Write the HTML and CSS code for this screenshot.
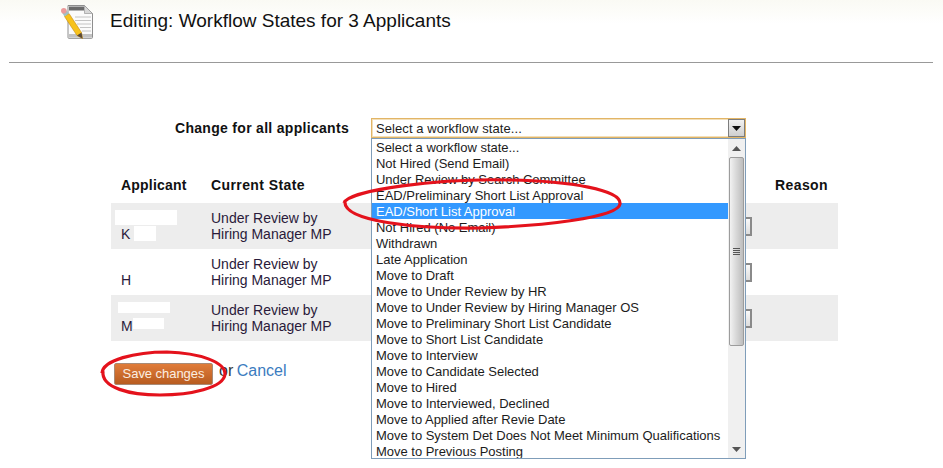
FILE: index.html
```html
<!DOCTYPE html>
<html lang="en">
<head>
<meta charset="utf-8">
<title>Editing: Workflow States</title>
<link rel="stylesheet" href="styles.css">
</head>
<body>
<header class="top">
  <svg class="doc-icon" width="34" height="37" viewBox="0 0 34 37" aria-hidden="true">
    <path d="M8 2.500H24.500L32.500 10.500V34.500a.8.8 0 0 1-.8.8H8.800a.8.8 0 0 1-.8-.8Z" fill="#fbfbfb" stroke="#8e8e8e"/>
    <path d="M9 3.500H24V7.500H9Z" fill="#6b6b6b"/>
    <path d="M24.500 2.500V10.500H32.500Z" fill="#d8d8d8" stroke="#9a9a9a" stroke-width=".7"/>
    <path d="M15 14H31M15 17.500H31M17 21H31M20 24.500H31M22 28H31" stroke="#c4c4c4"/>
    <rect x="9" y="31" width="23" height="3.500" fill="#c2c2c2"/>
    <path d="M4.500 13.500L9 10.500L21.500 29.500L22.500 35.500L17 32.500Z" fill="#f7c21c" stroke="#c58a10" stroke-width=".6"/>
    <path d="M2 9.500L6 7L9 10.500L4.500 13.500Z" fill="#9fc0c4"/>
    <circle cx="3.800" cy="7.800" r="2.800" fill="#ec9a9a"/>
    <path d="M17 32.500L21.500 29.500L22.500 35.500Z" fill="#5b4a38"/>
  </svg>
  <h1 class="title">Editing: Workflow States for 3 Applicants</h1>
</header>
<hr class="rule">
<main class="content">
  <div class="change-all">
    <label class="change-label">Change for all applicants</label>
    <div class="combo">
      <div class="combo-box">
        <span class="combo-value">Select a workflow state...</span>
        <span class="combo-btn"><svg width="9" height="5" viewBox="0 0 9 5"><path d="M0 0H9L4.500 5Z" fill="#111"/></svg></span>
      </div>
      <div class="popup">
        <ul class="options">
          <li>Select a workflow state...</li>
          <li>Not Hired (Send Email)</li>
          <li>Under Review by Search Committee</li>
          <li>EAD/Preliminary Short List Approval</li>
          <li class="selected">EAD/Short List Approval</li>
          <li>Not Hired (No Email)</li>
          <li>Withdrawn</li>
          <li>Late Application</li>
          <li>Move to Draft</li>
          <li>Move to Under Review by HR</li>
          <li>Move to Under Review by Hiring Manager OS</li>
          <li>Move to Preliminary Short List Candidate</li>
          <li>Move to Short List Candidate</li>
          <li>Move to Interview</li>
          <li>Move to Candidate Selected</li>
          <li>Move to Hired</li>
          <li>Move to Interviewed, Declined</li>
          <li>Move to Applied after Revie Date</li>
          <li>Move to System Det Does Not Meet Minimum Qualifications</li>
          <li>Move to Previous Posting</li>
        </ul>
        <div class="scrollbar">
          <span class="arrow"><svg width="9" height="5" viewBox="0 0 9 5"><path d="M0 5H9L4.500 0Z" fill="#555"/></svg></span>
          <div class="thumb"><span class="grip"></span></div>
          <span class="track"></span>
          <span class="arrow"><svg width="9" height="5" viewBox="0 0 9 5"><path d="M0 0H9L4.500 5Z" fill="#555"/></svg></span>
        </div>
      </div>
    </div>
  </div>

  <table class="grid">
    <thead>
      <tr>
        <th class="c-name">Applicant</th>
        <th class="c-state">Current State</th>
        <th class="c-new"></th>
        <th class="c-reason">Reason</th>
      </tr>
    </thead>
    <tbody>
      <tr class="alt">
        <td class="c-name"><span class="redact r1"></span><br>K<span class="redact r2"></span></td>
        <td class="c-state">Under Review by<br>Hiring Manager MP</td>
        <td class="c-new"><span class="row-select"></span></td>
        <td></td>
      </tr>
      <tr>
        <td class="c-name"><br>H</td>
        <td class="c-state">Under Review by<br>Hiring Manager MP</td>
        <td class="c-new"><span class="row-select"></span></td>
        <td></td>
      </tr>
      <tr class="alt">
        <td class="c-name"><span class="redact r3"></span><br>M<span class="redact r4"></span></td>
        <td class="c-state">Under Review by<br>Hiring Manager MP</td>
        <td class="c-new"><span class="row-select"></span></td>
        <td></td>
      </tr>
    </tbody>
  </table>

  <div class="actions">
    <button class="save" type="button">Save changes</button>
    <span class="or">or <a class="cancel" href="#">Cancel</a></span>
  </div>
</main>
<svg class="marks" width="943" height="468" viewBox="0 0 943 468" aria-hidden="true">
  <path d="M344 203C348 190 440 178 510 180C570 181 622 190 620 204C618 218 540 226 480 228C420 229 342 222 345 201" />
  <path d="M102 373C103 360 135 352 167 352C200 353 225 362 225 374C224 388 190 395 160 395C130 395 101 388 103 371" />
</svg>
</body>
</html>
```
FILE: styles.css
```css
html, body {
  margin: 0;
  padding: 0;
  height: 468px;
  overflow: hidden;
  background: #fff;
  font-family: "Liberation Sans", Arial, sans-serif;
  font-size: 14px;
  line-height: 16px;
  color: #1c1c1c;
}

.top {
  display: flex;
  align-items: flex-start;
  height: 62px;
  padding-left: 60px;
  box-sizing: border-box;
  background: linear-gradient(#fafaf4, #ffffff 24px);
}

.doc-icon {
  margin-top: 3px;
  flex: none;
}

.title {
  margin: 10px 0 0 16px;
  font-size: 19px;
  line-height: 22px;
  font-weight: normal;
  color: #111;
}

.rule {
  margin: 0 10px 0 9px;
  height: 1px;
  border: 0;
  background: #999;
}

.content {
  width: 727px;
  margin-left: 111px;
}

.change-all {
  display: flex;
  align-items: center;
  margin-top: 55px;
  height: 20px;
}

.change-label {
  width: 238px;
  text-align: right;
  font-weight: bold;
  letter-spacing: .3px;
  color: #111;
}

.combo {
  position: relative;
  margin-left: 22px;
  width: 375px;
  height: 20px;
  font-size: 13px;
}

.combo-box {
  display: flex;
  justify-content: space-between;
  height: 20px;
  box-sizing: border-box;
  border: 1px solid #e2b566;
  background: #fff;
  padding-left: 4px;
  align-items: center;
  box-shadow: inset 0 0 0 1px #f3dfb8;
}

.combo-value {
  padding-top: 1px;
  letter-spacing: .08px;
}

.combo-btn {
  display: flex;
  align-items: center;
  justify-content: center;
  width: 17px;
  height: 18px;
  box-sizing: border-box;
  border: 1px solid #7d7d7d;
  background: linear-gradient(#f2f2f2, #cfcfcf);
}

.popup {
  position: absolute;
  z-index: 5;
  top: 20px;
  left: 0;
  width: 375px;
  height: 321px;
  box-sizing: border-box;
  border: 1px solid #7f9db9;
  background: #fff;
  display: flex;
  justify-content: space-between;
}

.options {
  list-style: none;
  margin: 0;
  padding: 0;
  flex: 1;
  height: 319px;
  overflow: hidden;
}

.options li {
  height: 16px;
  box-sizing: border-box;
  padding: 1px 0 0 4px;
  white-space: nowrap;
  letter-spacing: -.02px;
}

.options li.selected {
  background: #3399ff;
  color: #fff;
}

.scrollbar {
  flex: none;
  width: 17px;
  display: flex;
  flex-direction: column;
  align-items: center;
  background: #f0f0f0;
}

.arrow {
  flex: none;
  height: 18px;
  display: flex;
  align-items: center;
  justify-content: center;
}

.thumb {
  flex: none;
  width: 15px;
  height: 189px;
  box-sizing: border-box;
  border: 1px solid #9c9c9c;
  border-radius: 2px;
  background: linear-gradient(90deg, #f2f2f2, #dcdcdc 40%, #bdbdbd);
  display: flex;
  align-items: center;
  justify-content: center;
}

.grip {
  display: block;
  width: 7px;
  height: 7px;
  background: repeating-linear-gradient(#555 0 1px, transparent 1px 2px);
}

.track {
  flex: 1;
}

.grid {
  width: 727px;
  margin-top: 29px;
  border-collapse: collapse;
  table-layout: fixed;
}

.grid th {
  height: 36px;
  padding: 0;
  text-align: left;
  font-weight: bold;
  letter-spacing: .4px;
  color: #111;
}

.grid th.c-name {
  letter-spacing: .2px;
}

.grid td {
  height: 46px;
  box-sizing: border-box;
  padding: 0;
  vertical-align: middle;
  color: #2a1a3a;
}

.grid .alt td {
  background: #ededed;
}

.c-name {
  width: 90px;
  padding-left: 10px !important;
}

.c-state {
  width: 160px;
}

.c-new {
  width: 404px;
}

.row-select {
  display: block;
  width: 381px;
  height: 19px;
  box-sizing: border-box;
  border: 2px solid #8a8a8a;
  background: linear-gradient(#fafafa, #dddddd);
}

.redact {
  display: inline-block;
  height: 15px;
  background: #fff;
  vertical-align: top;
}

.r1 { width: 62px; margin-left: -6px; }
.r2 { width: 22px; margin-left: 4px; }
.r3 { width: 52px; margin-left: -3px; height: 11px; }
.r4 { width: 31px; margin-left: 0; height: 11px; }

.actions {
  display: flex;
  align-items: center;
  margin: 22px 0 0 3px;
}

.save {
  width: 99px;
  height: 22px;
  padding: 0;
  border: 1px solid #a88a76;
  border-radius: 2px;
  background: linear-gradient(#e07c3a, #b85c20);
  color: #fbeee2;
  font: 13px/16px "Liberation Sans", Arial, sans-serif;
  letter-spacing: -.05px;
}

.or {
  margin: -6px 0 0 6px;
  font-size: 16px;
  line-height: 18px;
  color: #333;
  word-spacing: -1px;
}

.cancel {
  color: #3b7cc0;
  text-decoration: none;
}

.marks {
  position: absolute;
  top: 0;
  left: 0;
  z-index: 10;
  pointer-events: none;
  fill: none;
  stroke: #e4121c;
  stroke-width: 3.200;
}
```
